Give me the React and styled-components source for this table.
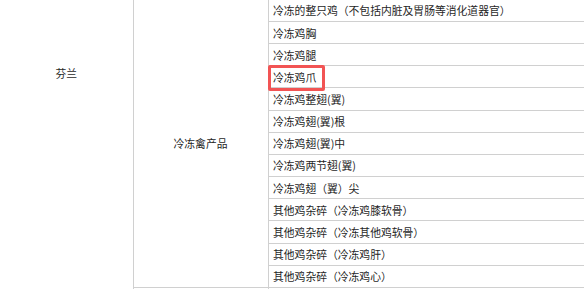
import React from 'react'
import styled, { createGlobalStyle } from 'styled-components'

const GlobalStyle = createGlobalStyle`
  html, body {
    margin: 0;
    padding: 0;
    background: #fff;
    overflow: hidden;
  }
  body {
    font-family: "Noto Sans CJK SC", "Microsoft YaHei", sans-serif;
    color: #1f1f1f;
  }
`

const products = [
  '冷冻的整只鸡（不包括内脏及胃肠等消化道器官）',
  '冷冻鸡胸',
  '冷冻鸡腿',
  '冷冻鸡爪',
  '冷冻鸡整翅(翼)',
  '冷冻鸡翅(翼)根',
  '冷冻鸡翅(翼)中',
  '冷冻鸡两节翅(翼)',
  '冷冻鸡翅（翼）尖',
  '其他鸡杂碎（冷冻鸡膝软骨）',
  '其他鸡杂碎（冷冻其他鸡软骨）',
  '其他鸡杂碎（冷冻鸡肝）',
  '其他鸡杂碎（冷冻鸡心）',
]

const marked = '冷冻鸡爪'

const Table = styled.table`
  width: 584px;
  margin-top: -1.2px;
  border-collapse: collapse;
  table-layout: fixed;
  font-size: 10.8px;

  tr {
    height: 22.17px;
  }
  td {
    border: 1px solid #d0d0d0;
    padding: 0 4.5px;
    line-height: 14px;
    white-space: nowrap;
  }
`

const CountryCell = styled.td`
  && {
    border-left: none;
    text-align: center;
    vertical-align: top;
    padding-top: 66px;
  }
`

const CategoryCell = styled.td`
  text-align: center;
  vertical-align: middle;
`

const ItemCell = styled.td`
  position: relative;
  vertical-align: middle;

  ${({ $marked }) => $marked && `
    &::after {
      content: '';
      position: absolute;
      left: -1px;
      top: -1px;
      width: 57px;
      height: 26px;
      box-sizing: border-box;
      border: 3px solid #f25454;
      border-radius: 2px;
    }
  `}
`

const App = () => {
  return (
    <>
      <GlobalStyle />
      <Table>
        <colgroup>
          <col style={{ width: 133 }} />
          <col style={{ width: 135 }} />
          <col style={{ width: 316 }} />
        </colgroup>
        <tbody>
          {products.map((name, i) => (
            <tr key={name}>
              {i === 0 && <CountryCell rowSpan={products.length + 1}>芬兰</CountryCell>}
              {i === 0 && <CategoryCell rowSpan={products.length}>冷冻禽产品</CategoryCell>}
              <ItemCell $marked={name === marked}>{name}</ItemCell>
            </tr>
          ))}
          <tr>
            <CategoryCell>&nbsp;</CategoryCell>
            <ItemCell>&nbsp;</ItemCell>
          </tr>
        </tbody>
      </Table>
    </>
  )
}

export default App
